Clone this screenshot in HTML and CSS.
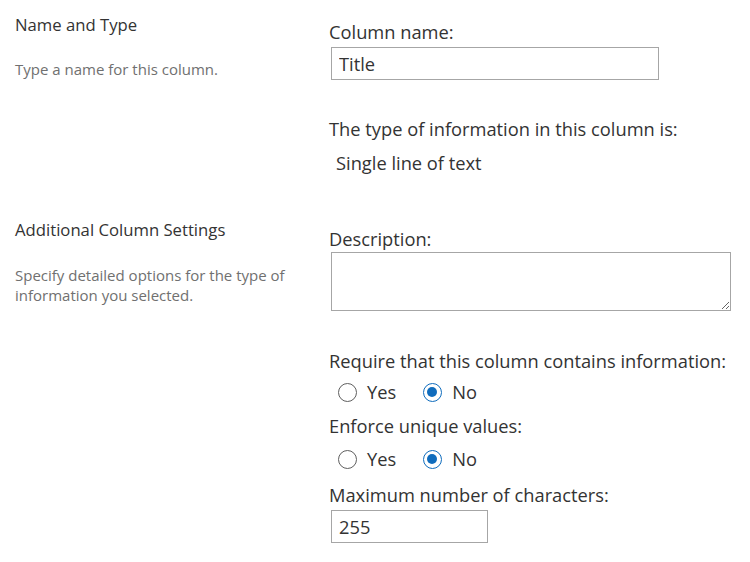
FILE: index.html
```html
<!DOCTYPE html>
<html lang="en">
<head>
<meta charset="utf-8">
<title>Column settings</title>
<link rel="stylesheet" href="styles.css">
</head>
<body>
<div class="page">
  <section class="sec sec-first">
    <div class="info info-first">
      <h2 class="info-title">Name and Type</h2>
      <p class="info-desc desc-first">Type a name for this column.</p>
    </div>
    <div class="fields">
      <label class="lbl" for="colname">Column name:</label>
      <input id="colname" class="txt txt-name" type="text" value="Title">
      <div class="lbl lbl-type">The type of information in this column is:</div>
      <div class="type-val">Single line of text</div>
    </div>
  </section>
  <section class="sec">
    <div class="info info-second">
      <h2 class="info-title">Additional Column Settings</h2>
      <p class="info-desc desc-second">Specify detailed options for the type of information you selected.</p>
    </div>
    <div class="fields">
      <label class="lbl" for="desc">Description:</label>
      <textarea id="desc" class="area"></textarea>
      <div class="lbl lbl-require">Require that this column contains information:</div>
      <div class="radios radios-1">
        <label class="opt"><input type="radio" name="req" class="rad"><span>Yes</span></label>
        <label class="opt"><input type="radio" name="req" class="rad" checked><span>No</span></label>
      </div>
      <div class="lbl lbl-unique">Enforce unique values:</div>
      <div class="radios radios-2">
        <label class="opt"><input type="radio" name="uniq" class="rad"><span>Yes</span></label>
        <label class="opt"><input type="radio" name="uniq" class="rad" checked><span>No</span></label>
      </div>
      <label class="lbl lbl-max" for="max">Maximum number of characters:</label>
      <input id="max" class="txt txt-max" type="text" value="255">
    </div>
  </section>
</div>
</body>
</html>
```

FILE: styles.css
```css
html, body {
  margin: 0;
  padding: 0;
  background: #ffffff;
}

body {
  font-family: "Open Sans", "Noto Sans", "Liberation Sans", sans-serif;
  color: #333333;
}

.page {
  padding-left: 15px;
}

.sec {
  display: grid;
  grid-template-columns: 314px 1fr;
}

.sec-first {
  padding-bottom: 32px;
}

.info-first {
  padding-top: 14px;
}

.info-second {
  padding-top: 12px;
}

.info-title {
  margin: 0;
  font-size: 16.7px;
  line-height: 22px;
  font-weight: 400;
  color: #333333;
}

.info-desc {
  margin: 0;
  font-size: 15px;
  line-height: 19.5px;
  color: #707070;
  width: 292px;
}

.desc-first {
  margin-top: 23.5px;
}

.desc-second {
  margin-top: 25px;
}

.fields {
  padding-top: 20px;
  display: flex;
  flex-direction: column;
  align-items: flex-start;
}

.lbl {
  display: block;
  font-size: 18.3px;
  line-height: 24px;
  color: #333333;
}

.txt {
  box-sizing: border-box;
  height: 33px;
  margin: 3px 0 0 2px;
  padding: 0 7px;
  border: 1px solid #a6a6a6;
  border-radius: 0;
  font-family: inherit;
  font-size: 18.3px;
  color: #333333;
  background: #ffffff;
  outline: none;
}

.txt-name {
  width: 328px;
}

.txt-max {
  width: 157px;
}

.lbl-type {
  margin-top: 37px;
}

.type-val {
  margin-top: 10px;
  padding-left: 7px;
  font-size: 18.3px;
  line-height: 24px;
}

.area {
  box-sizing: border-box;
  width: 400px;
  height: 59px;
  margin: 1px 0 0 2px;
  border: 1px solid #a6a6a6;
  border-radius: 0;
  font-family: inherit;
  font-size: 16px;
  outline: none;
}

.lbl-require {
  margin-top: 38px;
}

.radios {
  display: flex;
  align-items: center;
  height: 24px;
  padding-left: 9px;
  gap: 27px;
}

.radios-1 {
  margin-top: 7px;
}

.lbl-unique {
  margin-top: 10px;
}

.radios-2 {
  margin-top: 9px;
}

.lbl-max {
  margin-top: 12px;
}

.opt {
  display: flex;
  align-items: center;
  gap: 10px;
  font-size: 18.3px;
  line-height: 24px;
  color: #333333;
}

.rad {
  appearance: none;
  -webkit-appearance: none;
  box-sizing: border-box;
  width: 19px;
  height: 19px;
  margin: 0;
  border: 1.5px solid #5f5f5f;
  border-radius: 50%;
  background: #ffffff;
  position: relative;
}

.rad:checked {
  border-color: #0f6cbd;
}

.rad:checked::after {
  content: "";
  position: absolute;
  left: 3px;
  top: 3px;
  width: 10px;
  height: 10px;
  border-radius: 50%;
  background: #0f6cbd;
}
```
